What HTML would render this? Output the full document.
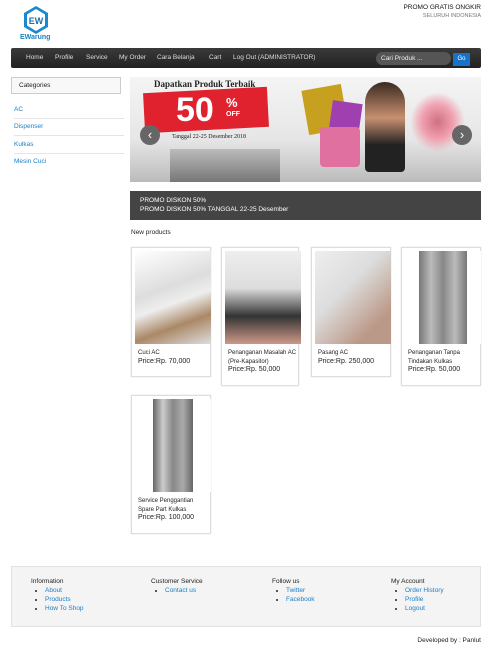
<!DOCTYPE html>
<html><head><style>
*{margin:0;padding:0;box-sizing:border-box}
body{width:504px;height:651px;background:#fff;font-family:"Liberation Sans",sans-serif;font-size:7px;color:#222;position:relative;overflow:hidden}
.a{position:absolute}
a{color:#1a7fc4;text-decoration:none}
.nav{left:11px;top:48px;width:470px;height:20px;background:linear-gradient(#3a3a3a,#222);border-radius:2px}
.nav span{position:absolute;top:6px;color:#ddd;font-size:6.5px}
.card{position:absolute;border:1px solid #ddd;background:#fff;box-shadow:0 0 1px #ccc}
.card .img{position:absolute;left:3px;top:3px;width:76px;height:93px;background:linear-gradient(135deg,#eee,#ccc 60%,#bbb)}
.card .t{position:absolute;left:6px;top:101px;font-size:6px;line-height:8.5px;color:#222;width:72px}
.card .p{font-size:7px}
.foot{left:11px;top:566px;width:470px;height:61px;background:#f4f4f4;border:1px solid #e2e2e2}
.col{position:absolute;top:10px;font-size:6.5px;line-height:9px}
.col ul{list-style:square;margin-left:14px;color:#555}
</style></head><body>
<svg class="a" style="left:23px;top:5px" width="26" height="30" viewBox="0 0 26 30"><polygon points="13,1 25,8 25,22 13,29 1,22 1,8" fill="#1a8ad0"/><polygon points="13,4 22,9.5 22,20.5 13,26 4,20.5 4,9.5" fill="#fff"/><text x="13" y="19" text-anchor="middle" font-size="9" font-weight="bold" fill="#1a6fb0" font-family="Liberation Sans">EW</text></svg>
<div class="a" style="left:20px;top:34px;font-size:7px;font-weight:bold;color:#1a7fc4">EWarung</div>
<div class="a" style="right:23px;top:4px;font-size:6.5px;color:#111">PROMO GRATIS ONGKIR</div>
<div class="a" style="right:23px;top:13px;font-size:5.5px;color:#777">SELURUH INDONESIA</div>
<div class="a nav">
<span style="left:15px">Home</span><span style="left:44px">Profile</span><span style="left:75px">Service</span><span style="left:108px">My Order</span><span style="left:146px">Cara Belanja</span><span style="left:198px">Cart</span><span style="left:222px">Log Out (ADMINISTRATOR)</span>
<div class="a" style="left:365px;top:4px;width:75px;height:13px;background:#555;border-radius:7px;color:#eee;font-size:6.5px;padding:3px 5px">Cari Produk ...</div>
<div class="a" style="left:442px;top:5px;width:17px;height:13px;background:#1673c9;color:#fff;font-size:6px;text-align:center;padding-top:3px">Go</div>
</div>
<div class="a" style="left:11px;top:77px;width:110px;height:17px;border:1px solid #ccc;background:#f8f8f8;font-size:6.5px;padding:4px 7px">Categories</div>
<div class="a" style="left:14px;top:106px;font-size:6.5px"><a>AC</a></div>
<div class="a" style="left:14px;top:118px;width:110px;border-top:1px solid #e5e5e5"></div>
<div class="a" style="left:14px;top:123px;font-size:6.5px"><a>Dispenser</a></div>
<div class="a" style="left:14px;top:135px;width:110px;border-top:1px solid #e5e5e5"></div>
<div class="a" style="left:14px;top:141px;font-size:6.5px"><a>Kulkas</a></div>
<div class="a" style="left:14px;top:153px;width:110px;border-top:1px solid #e5e5e5"></div>
<div class="a" style="left:14px;top:158px;font-size:6.5px"><a>Mesin Cuci</a></div>
<div class="a" style="left:130px;top:77px;width:351px;height:105px;background:linear-gradient(180deg,#f4f4f4,#e6e6e6 60%,#bbb);overflow:hidden">
<div class="a" style="left:24px;top:2px;font-size:9px;font-weight:bold;color:#222;font-family:'Liberation Serif',serif">Dapatkan Produk Terbaik</div>
<div class="a" style="left:14px;top:13px;width:124px;height:40px;background:#e0222f;transform:rotate(-3deg)"></div>
<div class="a" style="left:46px;top:14px;font-size:34px;font-weight:bold;color:#fff">50</div>
<div class="a" style="left:96px;top:18px;font-size:13px;font-weight:bold;color:#fff">%</div>
<div class="a" style="left:96px;top:34px;font-size:7px;font-weight:bold;color:#fff">OFF</div>
<div class="a" style="left:42px;top:57px;font-size:6px;color:#222;font-family:'Liberation Serif',serif">Tanggal 22-25 Desember 2018</div>
<div class="a" style="left:40px;top:72px;width:110px;height:33px;background:linear-gradient(#bbb,#777)"></div>
<div class="a" style="left:175px;top:10px;width:40px;height:45px;background:#c8a020;transform:rotate(-10deg)"></div>
<div class="a" style="left:200px;top:25px;width:30px;height:40px;background:#a040b0;transform:rotate(8deg)"></div>
<div class="a" style="left:190px;top:50px;width:40px;height:40px;background:#e070a0;border-radius:4px"></div>
<div class="a" style="left:235px;top:5px;width:40px;height:90px;background:linear-gradient(#3a2a20,#c89070 40%,#222 70%);border-radius:20px 20px 4px 4px"></div>
<div class="a" style="left:280px;top:15px;width:55px;height:60px;background:radial-gradient(#d07080,#f0a0b0 40%,transparent 70%)"></div>
<div class="a" style="left:10px;top:48px;width:20px;height:20px;border-radius:50%;background:#666;color:#fff;font-size:13px;text-align:center;line-height:19px">‹</div>
<div class="a" style="left:322px;top:48px;width:20px;height:20px;border-radius:50%;background:#666;color:#fff;font-size:13px;text-align:center;line-height:19px">›</div>
</div>
<div class="a" style="left:130px;top:191px;width:351px;height:29px;background:#444;color:#fff;font-size:6.5px;line-height:9px;padding:5px 10px">PROMO DISKON 50%<br>PROMO DISKON 50% TANGGAL 22-25 Desember</div>
<div class="a" style="left:131px;top:229px;font-size:6.5px">New products</div>
<div class="card" style="left:131px;top:247px;width:80px;height:130px"><div class="img" style="background:linear-gradient(160deg,#fff,#ddd 40%,#eee 55%,#a86 75%,#ddd)"></div><div class="t">Cuci AC<br><span class="p">Price:Rp. 70,000</span></div></div>
<div class="card" style="left:221px;top:247px;width:78px;height:139px"><div class="img" style="background:linear-gradient(#eee,#ddd 40%,#333 70%,#c98 )"></div><div class="t">Penanganan Masalah AC (Pre-Kapasitor)<br><span class="p">Price:Rp. 50,000</span></div></div>
<div class="card" style="left:311px;top:247px;width:80px;height:130px"><div class="img" style="background:linear-gradient(135deg,#eee,#ddd 40%,#b98 80%)"></div><div class="t">Pasang AC<br><span class="p">Price:Rp. 250,000</span></div></div>
<div class="card" style="left:401px;top:247px;width:80px;height:139px"><div class="img" style="background:#fff"><div style="margin:0 auto;width:48px;height:93px;background:linear-gradient(90deg,#777,#bbb,#888,#bbb,#777)"></div></div><div class="t">Penanganan Tanpa Tindakan Kulkas<br><span class="p">Price:Rp. 50,000</span></div></div>
<div class="card" style="left:131px;top:395px;width:80px;height:139px"><div class="img" style="background:#fff"><div style="margin:0 auto;width:40px;height:93px;background:linear-gradient(90deg,#666,#ccc,#888,#aaa,#666)"></div></div><div class="t">Service Penggantian Spare Part Kulkas<br><span class="p">Price:Rp. 100,000</span></div></div>
<div class="a foot">
<div class="col" style="left:19px">Information<ul><li><a>About</a></li><li><a>Products</a></li><li><a>How To Shop</a></li></ul></div>
<div class="col" style="left:139px">Customer Service<ul><li><a>Contact us</a></li></ul></div>
<div class="col" style="left:260px">Follow us<ul><li><a>Twitter</a></li><li><a>Facebook</a></li></ul></div>
<div class="col" style="left:379px">My Account<ul><li><a>Order History</a></li><li><a>Profile</a></li><li><a>Logout</a></li></ul></div>
</div>
<div class="a" style="right:23px;top:637px;font-size:6.5px">Developed by : Panlut</div>
</body></html>
